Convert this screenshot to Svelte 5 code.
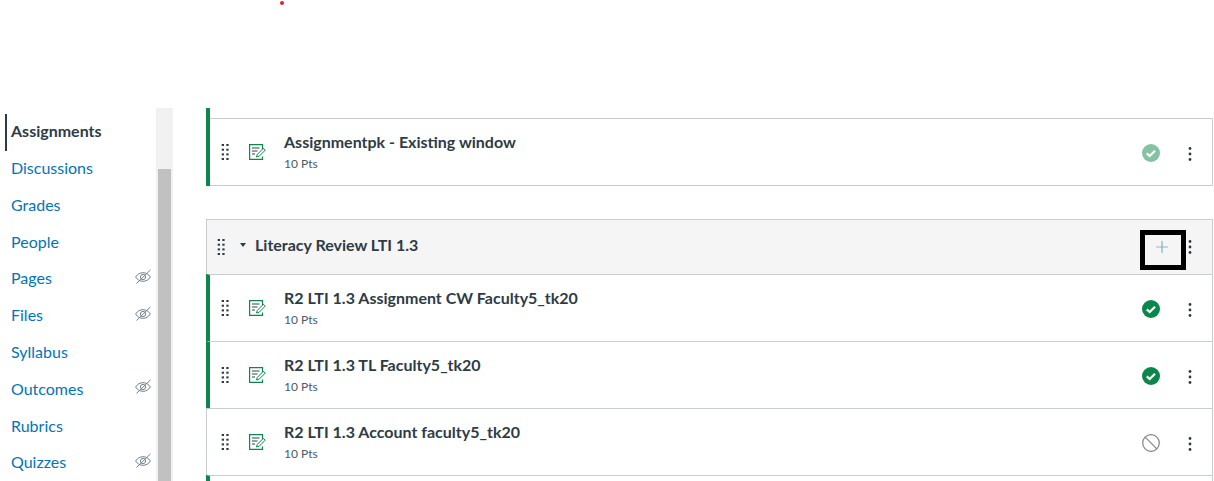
<script lang="ts">
    const navItems = [
        { label: 'Assignments', active: true },
        { label: 'Discussions' },
        { label: 'Grades' },
        { label: 'People' },
        { label: 'Pages', hidden: true },
        { label: 'Files', hidden: true },
        { label: 'Syllabus' },
        { label: 'Outcomes', hidden: true },
        { label: 'Rubrics' },
        { label: 'Quizzes', hidden: true }
    ];

    const moduleItems = [
        { title: 'R2 LTI 1.3 Assignment CW Faculty5_tk20', status: 'ok', bar: true },
        { title: 'R2 LTI 1.3 TL Faculty5_tk20', status: 'ok', bar: true },
        { title: 'R2 LTI 1.3 Account faculty5_tk20', status: 'off', bar: false }
    ];
</script>

{#snippet grip()}
    <svg class="grip" width="8" height="18" viewBox="0 0 8 18" aria-hidden="true">
        {#each [1, 5.7, 10.4, 15] as y}
            <rect x="0.7" {y} width="2.300" height="2" fill="#2d3b45" />
            <rect x="5.300" {y} width="2.300" height="2" fill="#2d3b45" />
        {/each}
    </svg>
{/snippet}

{#snippet kebab()}
    <svg class="kebab" width="4" height="14" viewBox="0 0 4 14" aria-hidden="true">
        <circle cx="2" cy="1.500" r="1.400" fill="#2d3b45" />
        <circle cx="2" cy="7" r="1.400" fill="#2d3b45" />
        <circle cx="2" cy="12.500" r="1.400" fill="#2d3b45" />
    </svg>
{/snippet}

{#snippet check(faded)}
    <svg class:faded width="18" height="18" viewBox="0 0 18 18" aria-hidden="true">
        <circle cx="9" cy="9" r="9" fill="#0b874b" />
        <path d="M4.800 9.300 7.700 12 13 6.800" fill="none" stroke="#fff" stroke-width="2.300" />
    </svg>
{/snippet}

{#snippet row(title, status, bar)}
    <div class="row" class:bar>
        <div class="row-grip">{@render grip()}</div>
        <svg class="assign-icon" width="17" height="16" viewBox="0 0 17 16" aria-hidden="true">
            <path d="M13.500 5.500V.6H.6v14.800h12.900v-3" fill="none" stroke="#0b874b" stroke-width="1.200" />
            <path d="M3 4h7.500M3 7h5.500M3 10h3" fill="none" stroke="#73818c" stroke-width="1.300" />
            <path d="M7.500 13l.8-2.600 6-6 1.900 1.800-6 6z" fill="#fff" stroke="#0b874b" stroke-width="1" />
        </svg>
        <div class="row-text">
            <div class="row-title">{title}</div>
            <div class="row-pts">10 Pts</div>
        </div>
        <div class="row-status">
            {#if status === 'ok'}
                {@render check(false)}
            {:else if status === 'faded'}
                {@render check(true)}
            {:else}
                <svg width="18" height="18" viewBox="0 0 18 18" aria-hidden="true">
                    <circle cx="9" cy="9" r="8.300" fill="none" stroke="#8a7f86" stroke-width="1.200" />
                    <path d="M3.200 3.200l11.600 11.600" stroke="#8a7f86" stroke-width="1.200" />
                </svg>
            {/if}
        </div>
        <div class="row-menu">{@render kebab()}</div>
    </div>
{/snippet}

<span class="red-dot"></span>

<div class="page">
    <nav class="sidebar">
        <ul>
            {#each navItems as item}
                <li class:active={item.active}>
                    <span>{item.label}</span>
                    {#if item.hidden}
                        <svg class="eye" width="16" height="15" viewBox="0 0 16 15" aria-hidden="true">
                            <path d="M.6 8c2-3 4.400-4.300 7.400-4.300S13.400 5 15.400 8c-2 3-4.400 4.300-7.400 4.300S2.600 11 .6 8z" fill="none" stroke="#73818c" stroke-width="1" />
                            <circle cx="8" cy="8" r="2.600" fill="none" stroke="#73818c" stroke-width="1" />
                            <path d="M1.500 14.500 15.500.8" stroke="#73818c" stroke-width="1" />
                        </svg>
                    {/if}
                </li>
            {/each}
        </ul>
        <div class="scrollbar"><div class="thumb"></div></div>
    </nav>

    <main class="content">
        <div class="group-top">
            {@render row('Assignmentpk - Existing window', 'faded', false)}
        </div>

        <section class="module">
            <header class="module-head">
                <div class="head-grip">{@render grip()}</div>
                <svg class="caret" width="6" height="4" viewBox="0 0 6 4" aria-hidden="true"><path d="M0 0h6L3 4z" fill="#2d3b45" /></svg>
                <h2>Literacy Review LTI 1.3</h2>
                <div class="add-box">
                    <svg width="12" height="12" viewBox="0 0 12 12" aria-hidden="true">
                        <path d="M0 6h12" stroke="#a5afb5" stroke-width="1" />
                        <path d="M6 0v12" stroke="#5aa5d6" stroke-width="1" />
                    </svg>
                </div>
                <div class="head-menu">{@render kebab()}</div>
            </header>
            {#each moduleItems as item}
                {@render row(item.title, item.status, item.bar)}
            {/each}
            <div class="row bar"></div>
        </section>
    </main>
</div>

<style>
    :global(body) {
        margin: 0;
        background: #fff;
        overflow: hidden;
        font-family: Lato, "Liberation Sans", sans-serif;
        color: #2d3b45;
    }

    .red-dot {
        position: absolute;
        left: 280px;
        top: 1px;
        width: 4px;
        height: 4px;
        border-radius: 50%;
        background: #e8202a;
    }

    .page {
        display: flex;
        height: 373px;
        margin-top: 108px;
        overflow: hidden;
    }

    .sidebar {
        display: flex;
        flex: none;
        width: 173px;
        margin-right: 33px;
    }

    ul {
        flex: 1;
        list-style: none;
        margin: 0;
        padding: 4.4px 5px 0 5px;
    }

    li {
        position: relative;
        display: flex;
        align-items: center;
        justify-content: space-between;
        height: 36.8px;
        padding-left: 6px;
        font-size: 16px;
        color: #0374b5;
    }

    li.active {
        color: #2d3b45;
        font-weight: 700;
    }

    li.active::before {
        content: '';
        position: absolute;
        left: 0;
        top: 1.6px;
        width: 2px;
        height: 37px;
        background: #2d3b45;
    }

    .eye {
        flex: none;
        margin-top: -3px;
    }

    .scrollbar {
        flex: none;
        width: 17px;
        background: #f1f1f1;
        padding: 61px 2px 0;
        box-sizing: border-box;
    }

    .thumb {
        height: 100%;
        background: #c1c1c1;
    }

    .content {
        flex: none;
        width: 1007px;
    }

    .group-top {
        padding-top: 10px;
        border-left: 4px solid #0b874b;
        margin-bottom: 33px;
    }

    .row {
        display: flex;
        align-items: center;
        height: 68px;
        box-sizing: border-box;
        background: #fff;
        border: 1px solid #c7cdd1;
        margin-bottom: -1px;
        padding-left: 14px;
    }

    .group-top .row {
        margin-bottom: 0;
        border-left: 0;
        padding-left: 11px;
    }

    .row.bar {
        border-left: 4px solid #0b874b;
        padding-left: 11px;
    }

    .row-grip {
        display: flex;
        width: 28px;
        flex: none;
    }

    .assign-icon {
        flex: none;
        margin-right: 18px;
    }

    .row-text {
        flex: 1;
        min-width: 0;
        margin-top: -2px;
    }

    .row-title {
        font-size: 16px;
        font-weight: 700;
        line-height: 22px;
        color: #2d3b45;
    }

    .row-pts {
        font-size: 12px;
        line-height: 16px;
        margin-top: 3px;
        color: #4a5b68;
    }

    .row-status {
        display: flex;
        justify-content: center;
        flex: none;
        width: 20px;
        margin-right: 27px;
        margin-top: 2px;
    }

    .row-menu {
        display: flex;
        flex: none;
        margin-right: 20px;
        margin-top: 4px;
    }

    .faded {
        opacity: 0.5;
    }

    .module-head {
        display: flex;
        align-items: center;
        height: 56px;
        box-sizing: border-box;
        background: #f5f5f5;
        border: 1px solid #c7cdd1;
        margin-bottom: -1px;
        padding-left: 10px;
    }

    .head-grip {
        display: flex;
        flex: none;
        width: 23px;
    }

    .caret {
        flex: none;
        margin-top: -4px;
        margin-right: 9px;
    }

    h2 {
        flex: 1;
        margin: -6px 0 0;
        font-size: 16px;
        font-weight: 700;
        color: #2d3b45;
    }

    .add-box {
        display: flex;
        align-items: flex-start;
        justify-content: center;
        flex: none;
        width: 46px;
        height: 40px;
        box-sizing: border-box;
        border: 5px solid #000;
        padding: 6px 2px 0 0;
        margin-top: 6px;
        margin-right: 2px;
        background: #f5f5f5;
    }

    .head-menu {
        display: flex;
        flex: none;
        margin-right: 20px;
    }
</style>
